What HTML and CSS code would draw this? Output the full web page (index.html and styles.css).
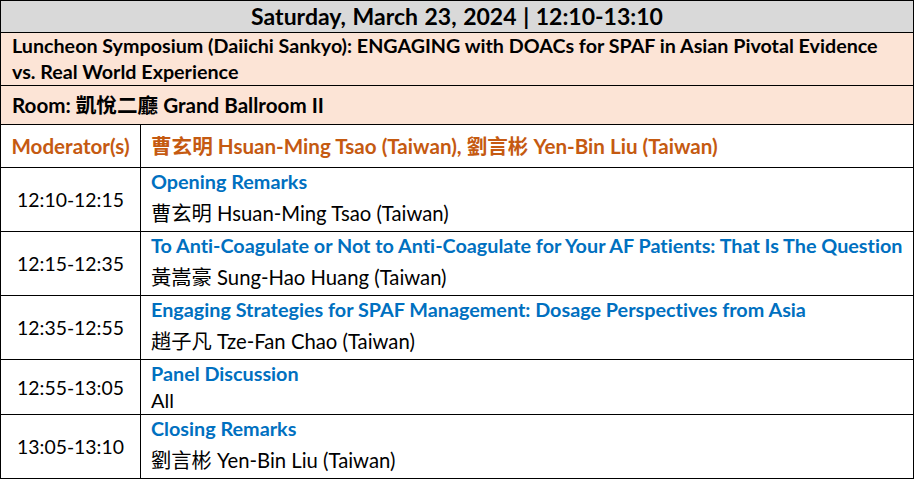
FILE: index.html
```html
<!DOCTYPE html>
<html lang="en">
<head>
<meta charset="utf-8">
<title>Luncheon Symposium</title>
<link rel="stylesheet" href="styles.css">
</head>
<body>
<table class="sched">
  <colgroup><col class="c-time"><col class="c-body"></colgroup>
  <tr class="r-date"><td colspan="2">Saturday, March 23, 2024 | 12:10-13:10</td></tr>
  <tr class="r-title"><td colspan="2">Luncheon Symposium (Daiichi Sankyo): ENGAGING with DOACs for SPAF in Asian Pivotal Evidence vs. Real World Experience</td></tr>
  <tr class="r-room"><td colspan="2">Room: 凱悅二廳 Grand Ballroom II</td></tr>
  <tr class="r-mod">
    <td class="mod-label">Moderator(s)</td>
    <td class="mod-names">曹玄明 Hsuan-Ming Tsao (Taiwan), 劉言彬 Yen-Bin Liu (Taiwan)</td>
  </tr>
  <tr class="r-item">
    <td class="time">12:10-12:15</td>
    <td class="body"><div class="topic">Opening Remarks</div><div class="who cjk">曹玄明 Hsuan-Ming Tsao (Taiwan)</div></td>
  </tr>
  <tr class="r-item">
    <td class="time">12:15-12:35</td>
    <td class="body"><div class="topic">To Anti-Coagulate or Not to Anti-Coagulate for Your AF Patients: That Is The Question</div><div class="who cjk">黃嵩豪 Sung-Hao Huang (Taiwan)</div></td>
  </tr>
  <tr class="r-item">
    <td class="time">12:35-12:55</td>
    <td class="body"><div class="topic">Engaging Strategies for SPAF Management: Dosage Perspectives from Asia</div><div class="who cjk">趙子凡 Tze-Fan Chao (Taiwan)</div></td>
  </tr>
  <tr class="r-item">
    <td class="time">12:55-13:05</td>
    <td class="body"><div class="topic">Panel Discussion</div><div class="who">All</div></td>
  </tr>
  <tr class="r-item">
    <td class="time">13:05-13:10</td>
    <td class="body"><div class="topic">Closing Remarks</div><div class="who cjk">劉言彬 Yen-Bin Liu (Taiwan)</div></td>
  </tr>
</table>
</body>
</html>
```
FILE: styles.css
```css
html, body {
  margin: 0;
  padding: 0;
  background: #fff;
}
body {
  font-family: Lato, "Noto Sans CJK TC", sans-serif;
  font-variant-ligatures: none;
  color: #000;
  font-size: 19.5px;
}
.sched {
  border-collapse: collapse;
  width: 914px;
  table-layout: fixed;
}
.sched td {
  border: 1px solid #000;
  padding: 0 0 0 11px;
  vertical-align: top;
}
.c-time { width: 140px; }
.r-date td {
  background: #d9d9d9;
  font-weight: 700;
  font-size: 23px;
  text-align: center;
  height: 31px;
  line-height: 31px;
  padding: 0;
  word-spacing: 1px;
}
.r-title td {
  background: #fce4d6;
  font-weight: 700;
  font-size: 19.7px;
  line-height: 26px;
  height: 52px;
  padding: 0 11px;
}
.r-room td {
  background: #fce4d6;
  font-weight: 700;
  font-size: 20.6px;
  line-height: 38px;
  height: 38px;
}
.r-mod td {
  color: #c55a11;
  font-weight: 700;
  font-size: 20.6px;
  line-height: 42px;
  height: 42px;
}
.r-mod td.mod-label {
  padding: 0;
  text-align: center;
}
.r-mod td.mod-names {
  padding-left: 10px;
}
.time {
  text-align: center;
  vertical-align: middle !important;
  padding: 0 !important;
  font-size: 19.4px;
}
.body {
  padding-left: 10px !important;
}
.topic {
  color: #0070c0;
  font-weight: 700;
  font-size: 19.8px;
  line-height: 27px;
}
.who {
  font-size: 20px;
  line-height: 27px;
}
.who.cjk {
  font-size: 20.3px;
  line-height: 36px;
}
```
